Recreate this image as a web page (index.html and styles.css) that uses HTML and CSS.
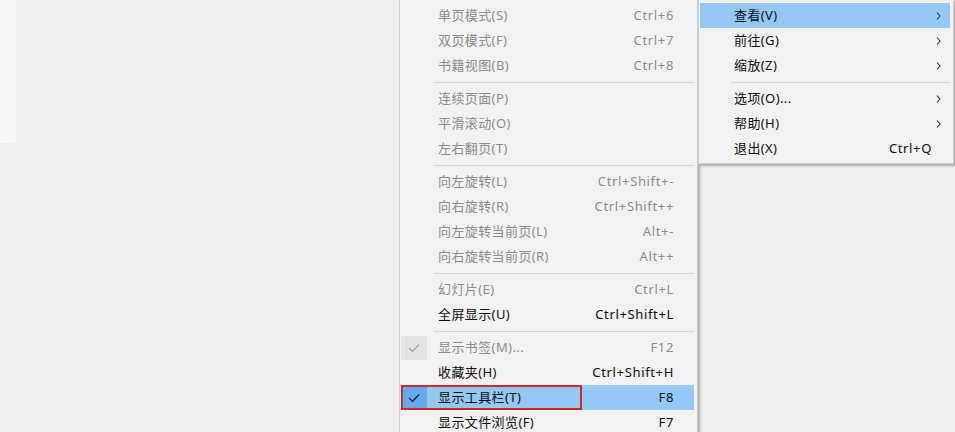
FILE: index.html
```html
<!DOCTYPE html>
<html>
<head>
<meta charset="utf-8" />
<title>菜单</title>
<link rel="stylesheet" href="styles.css">
</head>
<body>
<div class="side"></div>

<div class="menu view-menu">
    <div class="item off"><span class="chk"></span><span class="label">单页模式(S)</span><span class="key">Ctrl+6</span></div>
    <div class="item off"><span class="chk"></span><span class="label">双页模式(F)</span><span class="key">Ctrl+7</span></div>
    <div class="item off"><span class="chk"></span><span class="label">书籍视图(B)</span><span class="key">Ctrl+8</span></div>
    <div class="sep"></div>
    <div class="item off"><span class="chk"></span><span class="label">连续页面(P)</span><span class="key"></span></div>
    <div class="item off"><span class="chk"></span><span class="label">平滑滚动(O)</span><span class="key"></span></div>
    <div class="item off"><span class="chk"></span><span class="label">左右翻页(T)</span><span class="key"></span></div>
    <div class="sep"></div>
    <div class="item off"><span class="chk"></span><span class="label">向左旋转(L)</span><span class="key">Ctrl+Shift+-</span></div>
    <div class="item off"><span class="chk"></span><span class="label">向右旋转(R)</span><span class="key">Ctrl+Shift++</span></div>
    <div class="item off"><span class="chk"></span><span class="label">向左旋转当前页(L)</span><span class="key">Alt+-</span></div>
    <div class="item off"><span class="chk"></span><span class="label">向右旋转当前页(R)</span><span class="key">Alt++</span></div>
    <div class="sep"></div>
    <div class="item off"><span class="chk"></span><span class="label">幻灯片(E)</span><span class="key">Ctrl+L</span></div>
    <div class="item"><span class="chk"></span><span class="label">全屏显示(U)</span><span class="key">Ctrl+Shift+L</span></div>
    <div class="sep"></div>
    <div class="item off checked">
        <span class="chk"><svg width="12" height="10" viewBox="0 0 12 10"><polyline points="1,5 4.5,8.5 11,1.5" fill="none" stroke="currentColor" stroke-width="1.3"/></svg></span>
        <span class="label">显示书签(M)...</span><span class="key">F12</span>
    </div>
    <div class="item"><span class="chk"></span><span class="label">收藏夹(H)</span><span class="key">Ctrl+Shift+H</span></div>
    <div class="item active checked">
        <span class="chk"><svg width="12" height="10" viewBox="0 0 12 10"><polyline points="1,5 4.5,8.5 11,1.5" fill="none" stroke="currentColor" stroke-width="1.3"/></svg></span>
        <span class="label">显示工具栏(T)</span><span class="key">F8</span>
        <span class="mark"></span>
    </div>
    <div class="item"><span class="chk"></span><span class="label">显示文件浏览(F)</span><span class="key">F7</span></div>
</div>

<div class="menu main-menu">
    <div class="item active"><span class="chk"></span><span class="label">查看(V)</span><span class="key"></span><span class="arrow"><svg width="5" height="8" viewBox="0 0 5 8"><polyline points="1,0.5 4,4 1,7.5" fill="none" stroke="currentColor" stroke-width="1.1"/></svg></span></div>
    <div class="item"><span class="chk"></span><span class="label">前往(G)</span><span class="key"></span><span class="arrow"><svg width="5" height="8" viewBox="0 0 5 8"><polyline points="1,0.5 4,4 1,7.5" fill="none" stroke="currentColor" stroke-width="1.1"/></svg></span></div>
    <div class="item"><span class="chk"></span><span class="label">缩放(Z)</span><span class="key"></span><span class="arrow"><svg width="5" height="8" viewBox="0 0 5 8"><polyline points="1,0.5 4,4 1,7.5" fill="none" stroke="currentColor" stroke-width="1.1"/></svg></span></div>
    <div class="sep"></div>
    <div class="item"><span class="chk"></span><span class="label">选项(O)...</span><span class="key"></span><span class="arrow"><svg width="5" height="8" viewBox="0 0 5 8"><polyline points="1,0.5 4,4 1,7.5" fill="none" stroke="currentColor" stroke-width="1.1"/></svg></span></div>
    <div class="item"><span class="chk"></span><span class="label">帮助(H)</span><span class="key"></span><span class="arrow"><svg width="5" height="8" viewBox="0 0 5 8"><polyline points="1,0.5 4,4 1,7.5" fill="none" stroke="currentColor" stroke-width="1.1"/></svg></span></div>
    <div class="item"><span class="chk"></span><span class="label">退出(X)</span><span class="key">Ctrl+Q</span><span class="arrow"></span></div>
</div>
</body>
</html>
```

FILE: styles.css
```css
*{ padding:0; margin:0; box-sizing:border-box; }
body{
    width:955px;
    height:432px;
    overflow:hidden;
    position:relative;
    background-color:#efefef;
    font-family:"Noto Sans","Noto Sans CJK SC",sans-serif;
    font-size:13px;
    color:#0d0d0d;
}
.side{
    width:16px;
    height:143px;
    background:#f8f8f8;
    border-radius:0 0 4px 0;
}

/* 弹出菜单 */
.menu{
    position:absolute;
    background:#f2f2f2;
    border:1px solid #cfcfcf;
    box-shadow:2px 2px 2px rgba(0,0,0,0.28);
}
.view-menu{
    left:399px;
    top:-1px;
    width:299px;
    padding:3px 3px 3px 1px;
}
.main-menu{
    left:698px;
    top:-1px;
    width:256px;
    padding:3px 3px 2px 1px;
    z-index:2;
}

.item{
    position:relative;
    display:flex;
    align-items:center;
    height:25px;
    line-height:25px;
    white-space:nowrap;
}
.item .chk{
    width:26px;
    height:24px;
    display:flex;
    align-items:center;
    justify-content:center;
    flex:none;
}
.item .label{
    flex:1;
    padding-left:11px;
    letter-spacing:0.4px;
}
.item .key{
    padding-right:20px;
    letter-spacing:0.65px;
}
.main-menu .item .label{ padding-left:8px; }
.main-menu .item .key{ padding-right:2px; }
.item .arrow{
    width:16px;
    display:flex;
    align-items:center;
    color:#333;
}
.main-menu .item .arrow{ padding-left:2px; }

.item.off{ color:#8b8b8b; }
.item.off.checked .chk{
    background:#e3e3e3;
    color:#a8a8a8;
}
.item.active{ background:#94c9f5; }
.item.active.checked .chk{
    background:#64aaec;
    color:#10273f;
}
.item .mark{
    position:absolute;
    left:0;
    top:0;
    width:181px;
    height:100%;
    border:2px solid #d0262c;
}

.sep{
    height:1px;
    background:#d6d6d6;
    margin:4px 0 3px 33px;
}
.main-menu .sep{ margin-left:31px; }
```
